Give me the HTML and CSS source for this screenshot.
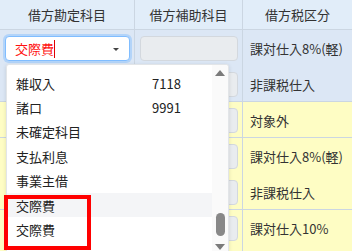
FILE: index.html
```html
<!DOCTYPE html>
<html>
<head>
<meta charset="utf-8">
<link rel="stylesheet" href="styles.css">
</head>
<body>
<div class="sheet">
  <div class="row head">
    <div class="cell">借方勘定科目</div>
    <div class="cell">借方補助科目</div>
    <div class="cell">借方税区分</div>
  </div>
  <div class="group blue">
    <div class="line">
      <div class="cell c1">
        <div class="select"><span class="val">交際費</span><span class="caret"></span><span class="arrow"></span></div>
      </div>
      <div class="cell c2"><div class="box"></div></div>
      <div class="cell c3">課対仕入8%(軽)</div>
    </div>
    <div class="line">
      <div class="cell c1"></div>
      <div class="cell c2"><div class="box"></div></div>
      <div class="cell c3">非課税仕入</div>
    </div>
  </div>
  <div class="group yellow">
    <div class="line">
      <div class="cell c1"></div>
      <div class="cell c2"><div class="box"></div></div>
      <div class="cell c3">対象外</div>
    </div>
  </div>
  <div class="group yellow">
    <div class="line">
      <div class="cell c1"></div>
      <div class="cell c2"><div class="box"></div></div>
      <div class="cell c3">課対仕入8%(軽)</div>
    </div>
    <div class="line">
      <div class="cell c1"></div>
      <div class="cell c2"><div class="box"></div></div>
      <div class="cell c3">非課税仕入</div>
    </div>
  </div>
  <div class="group yellow last">
    <div class="line">
      <div class="cell c1"></div>
      <div class="cell c2"><div class="box"></div></div>
      <div class="cell c3">課対仕入10%</div>
    </div>
  </div>
</div>

<div class="dropdown">
  <ul class="options">
    <li><span class="name">雑収入</span><span class="code">7118</span></li>
    <li><span class="name">諸口</span><span class="code">9991</span></li>
    <li><span class="name">未確定科目</span></li>
    <li><span class="name">支払利息</span></li>
    <li><span class="name">事業主借</span></li>
    <li class="hover"><span class="name">交際費</span></li>
    <li><span class="name">交際費</span></li>
  </ul>
  <div class="scrollbar">
    <span class="up"></span>
    <span class="thumb"></span>
    <span class="down"></span>
  </div>
</div>
<div class="mark"></div>
</body>
</html>
```

FILE: styles.css
```css
html, body {
  margin: 0;
  padding: 0;
  background: #ffffff;
  overflow: hidden;
}
body {
  width: 352px;
  height: 251px;
  position: relative;
  font-family: "Noto Sans CJK JP", "Noto Sans", sans-serif;
  font-size: 13px;
  color: #333333;
}
.sheet {
  width: 352px;
  height: 251px;
  overflow: hidden;
}
.row, .line {
  display: grid;
  grid-template-columns: 135px 108px 1fr;
}
.head {
  height: 29px;
  background: #e1edf9;
  border-bottom: 1px solid #cbd6e2;
}
.head .cell {
  display: flex;
  align-items: center;
  justify-content: center;
  border-right: 1px solid #cbd6e2;
  color: #333;
}
.head .cell:last-child { border-right: none; }
.group {
  border-bottom: 1px solid #cbd6e2;
}
.group.last { border-bottom: none; }
.group.blue { background: #dce7f5; }
.group.yellow { background: #fefdc4; }
.line {
  height: 36px;
}
.group .line:last-child { height: 35px; }
.group.last .line:last-child { height: 41px; }
.cell {
  border-right: 1px solid #cbd6e2;
  box-sizing: border-box;
}
.cell.c3 {
  border-right: none;
  display: flex;
  align-items: flex-start;
  padding: 9px 0 0 7px;
  color: #333;
}
.cell.c2 {
  padding: 6px 4px 0 5px;
}
.box {
  height: 25px;
  box-sizing: border-box;
  border: 1px solid #d3d8de;
  border-radius: 4px;
  background: #e9ecef;
}
.cell.c1 {
  padding: 6px 4px 0 5px;
}
.select {
  position: relative;
  height: 25px;
  box-sizing: border-box;
  border: 1px solid #80bdff;
  border-radius: 4px;
  background: #fff;
  box-shadow: 0 0 0 2px rgba(128, 189, 255, 0.45);
  display: flex;
  align-items: center;
  padding-left: 9px;
}
.val {
  color: #ff1010;
  line-height: 1;
}
.caret {
  width: 1px;
  height: 18px;
  background: #e00000;
}
.arrow {
  position: absolute;
  right: 10px;
  top: 11px;
  width: 0;
  height: 0;
  border-left: 3px solid transparent;
  border-right: 3px solid transparent;
  border-top: 3px solid #444;
}
.dropdown {
  position: absolute;
  left: 6px;
  top: 64px;
  width: 221px;
  height: 186px;
  background: #fff;
  border: 1px solid #e2e5e8;
  border-bottom: none;
  border-radius: 3px 3px 0 0;
  box-shadow: 0 1px 4px rgba(0,0,0,0.12);
  display: flex;
  overflow: hidden;
}
.options {
  list-style: none;
  margin: 0;
  padding: 6px 0 0 0;
  flex: 1;
}
.options li {
  height: 24.4px;
  display: flex;
  align-items: center;
  padding-left: 9px;
  color: #222;
}
.options li.hover {
  background: #f4f5f7;
}
.name {
  width: 136px;
}
.code {
  color: #222;
}
.scrollbar {
  width: 16px;
  background: #fafafa;
  position: relative;
}
.up {
  position: absolute;
  left: 3px;
  top: 5px;
  border-left: 5px solid transparent;
  border-right: 5px solid transparent;
  border-bottom: 6px solid #7a7a7a;
}
.thumb {
  position: absolute;
  left: 4px;
  top: 148px;
  width: 9px;
  height: 23px;
  border-radius: 5px;
  background: #888888;
}
.down {
  position: absolute;
  left: 3px;
  top: 179px;
  border-left: 5px solid transparent;
  border-right: 5px solid transparent;
  border-top: 6px solid #7a7a7a;
}
.mark {
  position: absolute;
  left: 4px;
  top: 195px;
  width: 79px;
  height: 47px;
  border: 4px solid #ff0000;
}
```
